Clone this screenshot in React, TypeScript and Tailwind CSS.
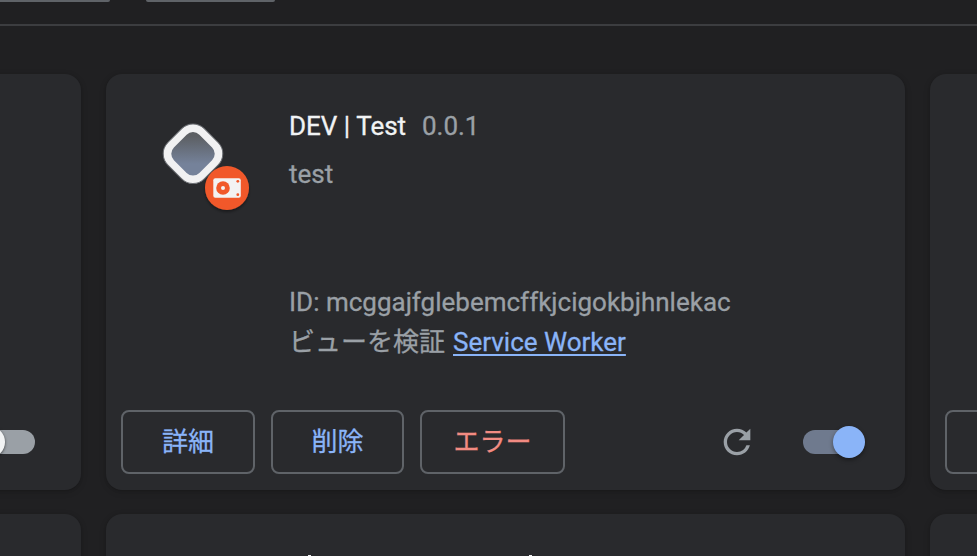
import type { ReactNode } from "react";

const cardShadow = "shadow-[0_2px_6px_1px_rgba(0,0,0,0.1),0_1px_3px_rgba(0,0,0,0.15)]";

function Card({ className = "", children }: { className?: string; children?: ReactNode }) {
  return <div className={`shrink-0 rounded-2xl bg-[#292a2d] ${cardShadow} ${className}`}>{children}</div>;
}

function ActionButton({ className, children }: { className: string; children: ReactNode }) {
  return (
    <button
      className={`flex h-16 shrink-0 items-center justify-center rounded-lg border-2 border-[#5f6368] text-[26px] font-normal [-webkit-text-stroke:0.3px] ${className}`}
    >
      {children}
    </button>
  );
}

function ExtensionIcon() {
  return (
    <svg width="104" height="104" viewBox="150 110 104 104" className="block">
      <defs>
        <linearGradient id="face" x1="0" y1="0" x2="1" y2="1">
          <stop offset="0.15" stopColor="#5c5f63" />
          <stop offset="0.7" stopColor="#75829a" />
        </linearGradient>
        <filter id="drop" x="-20%" y="-20%" width="140%" height="150%">
          <feDropShadow dx="0" dy="2" stdDeviation="1.5" floodColor="#000" floodOpacity="0.4" />
        </filter>
      </defs>
      <g transform="rotate(45 193 153.800)">
        <rect x="167.250" y="128.050" width="51.500" height="51.500" rx="16" fill="#f1f1f2" stroke="#6b6e73" strokeWidth="1" />
        <rect x="175" y="135.800" width="36" height="36" rx="9" fill="url(#face)" />
      </g>
      <circle cx="227" cy="188" r="22" fill="#f1592a" filter="url(#drop)" />
      <rect x="213.300" y="178.300" width="27.500" height="19.500" rx="2" fill="#f3f3f3" />
      <circle cx="223" cy="188" r="6.800" fill="#f1592a" />
      <circle cx="223" cy="188" r="2" fill="#f3f3f3" />
      <circle cx="237.800" cy="181.300" r="1.400" fill="#f1592a" />
      <circle cx="237.800" cy="194.700" r="1.400" fill="#f1592a" />
    </svg>
  );
}

function Toggle() {
  return (
    <div className="flex h-8 w-[62px] items-center">
      <div className="h-6 w-[58px] rounded-full bg-[#6f7a8e]" />
      <div className="-ml-7 size-8 shrink-0 rounded-full bg-[#8ab4f8] shadow-[0_2px_4px_rgba(0,0,0,0.4)]" />
    </div>
  );
}

export default function App() {
  return (
    <div className="h-[556px] w-[977px] overflow-hidden bg-[#202022] font-[Roboto,'Noto_Sans_CJK_JP',sans-serif] text-[26px] text-[#9aa0a6]">
      <div className="flex h-6 gap-9">
        <div className="-ml-2 h-0.5 w-[118px] rounded-b-sm bg-[#5f6368]" />
        <div className="h-0.5 w-[129px] rounded-b-sm bg-[#5f6368]" />
      </div>
      <div className="h-0.5 bg-[#3c3d40]" />

      <div className="mt-12 flex gap-[25px]">
        <Card className="-ml-4 flex h-[416px] w-[97px] items-end overflow-hidden pb-8">
          <div className="flex h-8 items-center">
            <div className="h-6 w-[51px] rounded-r-full bg-[#9aa0a6]" />
            <div className="-ml-[62px] size-8 shrink-0 rounded-full bg-[#f1f3f4] shadow-[0_1px_3px_rgba(0,0,0,0.6)]" />
          </div>
        </Card>

        <Card className="flex h-[416px] w-[799px] flex-col">
          <div className="flex h-[320px] shrink-0">
            <div className="w-[183px] pl-11 pt-9">
              <ExtensionIcon />
            </div>
            <div className="whitespace-nowrap [-webkit-text-stroke:0.3px]">
              <div className="flex h-10 gap-4 pt-8 leading-10">
                <span className="text-[#f1f3f4]">DEV | Test</span>
                <span className="tracking-[-0.1px]">0.0.1</span>
              </div>
              <div className="mt-10 h-10 leading-10">test</div>
              <div className="mt-[88px] h-10 leading-10">ID: mcggajfglebemcffkjcigokbjhnlekac</div>
              <div className="flex h-10 leading-10">
                <span>ビューを検証</span>
                <a className="ml-2 text-[#8ab4f8] underline decoration-2 underline-offset-[3px]">Service Worker</a>
              </div>
            </div>
          </div>
          <div className="mt-4 flex items-center pl-[15px]">
            <div className="flex gap-4">
              <ActionButton className="w-[134px] text-[#8ab4f8]">詳細</ActionButton>
              <ActionButton className="w-[133px] text-[#8ab4f8]">削除</ActionButton>
              <ActionButton className="w-[145px] text-[#f28b82]">エラー</ActionButton>
            </div>
            <svg width="40" height="40" viewBox="0 0 24 24" className="ml-[152px]" fill="#9aa0a6">
              <path d="M17.65 6.350A7.958 7.958 0 0 0 12 4c-4.420 0-7.990 3.580-7.990 8s3.570 8 7.990 8c3.730 0 6.840-2.550 7.730-6h-2.080A5.990 5.990 0 0 1 12 18c-3.310 0-6-2.690-6-6s2.690-6 6-6c1.660 0 3.140.69 4.220 1.780L13 11h7V4l-2.350 2.350z" />
            </svg>
            <div className="ml-[46px]">
              <Toggle />
            </div>
          </div>
        </Card>

        <Card className="flex h-[416px] w-[97px] items-end pb-4 pl-[15px]">
          <div className="h-16 w-[134px] rounded-lg border-2 border-[#5f6368]" />
        </Card>
      </div>

      <div className="mt-6 flex gap-[25px]">
        <Card className="-ml-4 h-[416px] w-[97px]" />
        <Card className="flex h-[416px] w-[799px] gap-[218px] pl-[202px] pt-[41px]">
          <div className="h-4 w-[3px] bg-[#f1f3f4]" />
          <div className="h-4 w-[3px] bg-[#f1f3f4]" />
        </Card>
        <Card className="h-[416px] w-[97px]" />
      </div>
    </div>
  );
}
